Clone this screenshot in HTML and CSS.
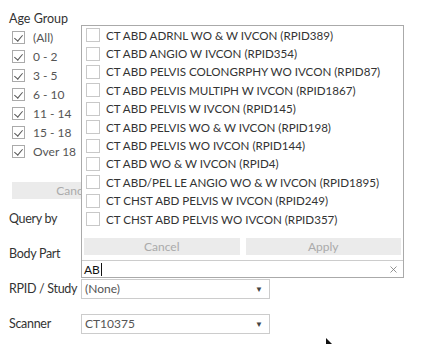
FILE: index.html
```html
<!DOCTYPE html>
<html lang="en">
<head>
  <meta charset="UTF-8" />
  <title>Filters</title>
  <link rel="stylesheet" href="styles.css">
</head>
<body>
  <div class="panel">
    <div class="filter-title">Age Group</div>
    <div class="age-list">
      <label class="age-item"><span class="box checked"></span>(All)</label>
      <label class="age-item"><span class="box checked"></span>0 - 2</label>
      <label class="age-item"><span class="box checked"></span>3 - 5</label>
      <label class="age-item"><span class="box checked"></span>6 - 10</label>
      <label class="age-item"><span class="box checked"></span>11 - 14</label>
      <label class="age-item"><span class="box checked"></span>15 - 18</label>
      <label class="age-item"><span class="box checked"></span>Over 18</label>
    </div>
    <div class="age-buttons">
      <button class="btn">Cancel</button>
    </div>

    <div class="params">
      <div class="param-row"><span class="param-label">Query by</span></div>
      <div class="param-row"><span class="param-label">Body Part</span></div>
      <div class="param-row">
        <span class="param-label">RPID / Study</span>
        <div class="select">(None)<span class="arrow">&#9660;</span></div>
      </div>
      <div class="param-row">
        <span class="param-label">Scanner</span>
        <div class="select">CT10375<span class="arrow">&#9660;</span></div>
      </div>
    </div>
  </div>

  <div class="popup">
    <div class="popup-list">
      <label class="study"><span class="box"></span>CT ABD ADRNL WO &amp; W IVCON (RPID389)</label>
      <label class="study"><span class="box"></span>CT ABD ANGIO W IVCON (RPID354)</label>
      <label class="study"><span class="box"></span>CT ABD PELVIS COLONGRPHY WO IVCON (RPID87)</label>
      <label class="study"><span class="box"></span>CT ABD PELVIS MULTIPH W IVCON (RPID1867)</label>
      <label class="study"><span class="box"></span>CT ABD PELVIS W IVCON (RPID145)</label>
      <label class="study"><span class="box"></span>CT ABD PELVIS WO &amp; W IVCON (RPID198)</label>
      <label class="study"><span class="box"></span>CT ABD PELVIS WO IVCON (RPID144)</label>
      <label class="study"><span class="box"></span>CT ABD WO &amp; W IVCON (RPID4)</label>
      <label class="study"><span class="box"></span>CT ABD/PEL LE ANGIO WO &amp; W IVCON (RPID1895)</label>
      <label class="study"><span class="box"></span>CT CHST ABD PELVIS W IVCON (RPID249)</label>
      <label class="study"><span class="box"></span>CT CHST ABD PELVIS WO IVCON (RPID357)</label>
    </div>
    <div class="popup-buttons">
      <button class="btn">Cancel</button>
      <button class="btn">Apply</button>
    </div>
    <div class="search">
      <span class="search-text">AB</span><span class="caret"></span>
      <svg class="clear" width="7" height="7" viewBox="0 0 7 7"><path d="M0.5 0.5L6.5 6.5M6.5 0.5L0.5 6.5" stroke="#777" stroke-width="0.8"/></svg>
    </div>
  </div>

  <svg class="pointer" width="8" height="6" viewBox="0 0 8 6"><path d="M0 0L0 6L6 6Z" fill="#111"/></svg>
</body>
</html>
```

FILE: styles.css
```css
body {
  margin: 0;
  font-family: Lato, "Noto Sans", sans-serif;
  font-size: 12px;
  color: #333;
  background: #fff;
}

.panel {
  padding-top: 10px;
}

.filter-title {
  padding-left: 9px;
  height: 18px;
  line-height: 18px;
  font-size: 12.5px;
}

.age-list {
  padding-left: 12px;
}

.age-item {
  display: flex;
  align-items: center;
  height: 19px;
  color: #555;
}

.box {
  width: 13px;
  height: 13px;
  border: 1px solid #aaa;
  box-sizing: border-box;
  margin-right: 8px;
  position: relative;
  background: #fff;
}

.box.checked::after {
  content: "";
  position: absolute;
  left: 3px;
  top: 1px;
  width: 4px;
  height: 7px;
  border-right: 1.3px solid #555;
  border-bottom: 1.3px solid #555;
  transform: rotate(40deg);
}

.age-buttons {
  display: flex;
  padding-left: 12px;
  margin-top: 21px;
}

.btn {
  flex: 1;
  height: 17px;
  padding: 0;
  border: none;
  background: #ebebeb;
  color: #aaa;
  font-family: inherit;
  font-size: 12px;
  text-align: center;
}

.age-buttons .btn {
  flex: none;
  width: 124px;
}

.params {
  margin-top: 2px;
}

.param-row {
  display: flex;
  align-items: center;
  height: 35px;
  padding-left: 9px;
}

.param-label {
  width: 72px;
  flex: none;
  white-space: nowrap;
  font-size: 12.5px;
  letter-spacing: -0.3px;
}

.select {
  width: 189px;
  flex: none;
  height: 20px;
  border: 1px solid #ccc;
  box-sizing: border-box;
  display: flex;
  align-items: center;
  justify-content: space-between;
  padding: 0 6px 0 3px;
  font-size: 12px;
  color: #555;
}

.arrow {
  font-size: 8px;
  color: #444;
}

.popup {
  position: absolute;
  left: 81px;
  top: 25px;
  width: 323px;
  height: 253px;
  box-sizing: border-box;
  border: 1px solid #aaa;
  background: #fff;
  display: flex;
  flex-direction: column;
}

.popup-list {
  padding-left: 4px;
}

.study {
  display: flex;
  align-items: center;
  height: 18.4px;
  white-space: nowrap;
  font-size: 11.6px;
}

.study .box {
  width: 14px;
  height: 14px;
  border-color: #c8c8c8;
  margin-right: 6px;
}

.popup-buttons {
  display: flex;
  gap: 6px;
  padding: 0 2px;
  margin-top: 10px;
}

.search {
  margin-top: 5px;
  border-top: 1px solid #ccc;
  flex: 1;
  display: flex;
  align-items: center;
  padding: 0 6px 0 2px;
  color: #111;
}

.caret {
  width: 1px;
  height: 13px;
  background: #111;
  margin-left: 1px;
}

.clear {
  margin-left: auto;
}

.pointer {
  position: absolute;
  left: 326px;
  top: 338px;
}
```
